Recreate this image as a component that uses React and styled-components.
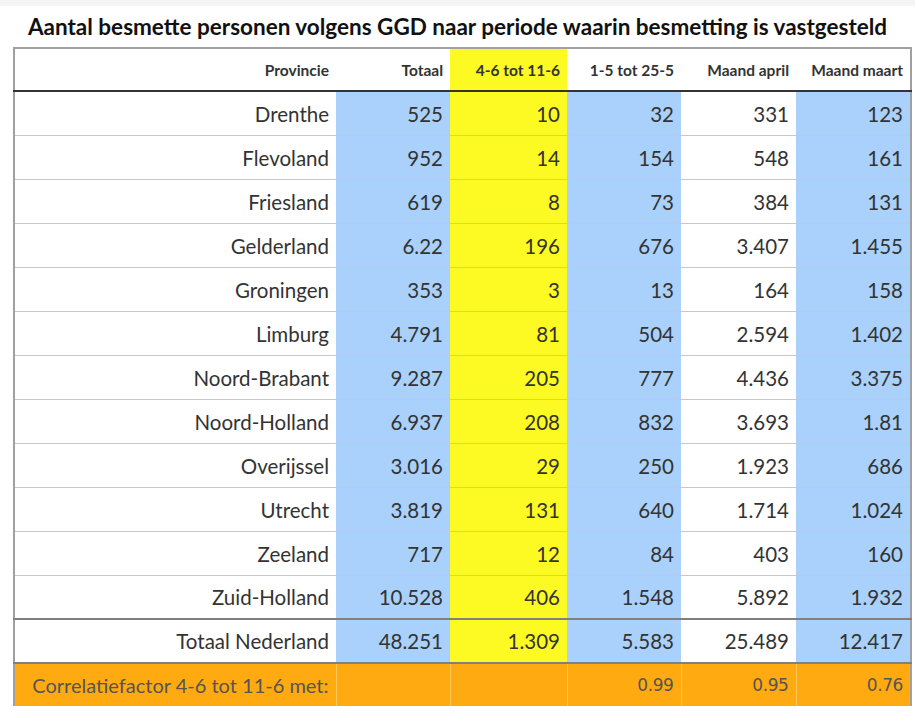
import React from "react";
import styled, { createGlobalStyle } from "styled-components";

const GlobalStyle = createGlobalStyle`
	body {
		margin: 0;
		background: #fff;
		font-family: Lato, "Liberation Sans", sans-serif;
	}
`;

const Page = styled.div`
	width: 915px;
	height: 713px;
	border-top: 6px solid #f4f4f4;
	box-sizing: border-box;
	display: flex;
	flex-direction: column;
	align-items: flex-start;
`;

const Title = styled.h1`
	margin: 0;
	width: 915px;
	height: 41px;
	display: flex;
	align-items: center;
	justify-content: center;
	font-family: Lato, "Liberation Sans", sans-serif;
	font-weight: 700;
	font-size: 22.5px;
	color: #111;
`;

const Table = styled.table`
	margin-left: 13px;
	width: 899px;
	border-collapse: collapse;
	table-layout: fixed;
	border: 2px solid #a0a0a0;
	border-bottom: none;
`;

const bg = {
	white: "#fff",
	blue: "#a9d1fb",
	yellow: "#fdf922",
};

const HeadCell = styled.th`
	height: 41px;
	padding: 0 7px;
	text-align: right;
	font-size: 15.5px;
	font-weight: 700;
	color: #333;
	background: ${(p) => (p.$tone === "yellow" ? bg.yellow : "#fff")};
	border-bottom: 2px solid #333;
`;

const Cell = styled.td`
	height: ${(p) => (p.$strong ? "42px" : "43px")};
	padding: 0 7px;
	text-align: right;
	font-size: 20.5px;
	color: #333;
	background: ${(p) => bg[p.$tone || "white"]};
	border-bottom: ${(p) => (p.$strong ? "2px solid #808080" : "1px solid #c8c8c8")};
`;

const NameCell = styled(Cell)`
	color: #333;
`;

const FooterCell = styled.td`
	height: 42px;
	padding: 0 7px;
	text-align: right;
	background: #ffaa10;
	font-family: "DejaVu Sans", Verdana, sans-serif;
	font-size: 17px;
	letter-spacing: -0.4px;
	color: #555;
	border-left: 1px solid #ffc95a;
`;

const FooterLabel = styled(FooterCell)`
	font-family: Lato, "Liberation Sans", sans-serif;
	font-size: 20px;
	letter-spacing: 0;
	color: #555;
	border-left: none;
`;

const columns = [
	{ label: "Provincie", tone: "white" },
	{ label: "Totaal", tone: "blue" },
	{ label: "4-6 tot 11-6", tone: "yellow" },
	{ label: "1-5 tot 25-5", tone: "blue" },
	{ label: "Maand april", tone: "white" },
	{ label: "Maand maart", tone: "blue" },
];

const widths = [322, 114, 117, 114, 115, 115];

const rows = [
	["Drenthe", "525", "10", "32", "331", "123"],
	["Flevoland", "952", "14", "154", "548", "161"],
	["Friesland", "619", "8", "73", "384", "131"],
	["Gelderland", "6.22", "196", "676", "3.407", "1.455"],
	["Groningen", "353", "3", "13", "164", "158"],
	["Limburg", "4.791", "81", "504", "2.594", "1.402"],
	["Noord-Brabant", "9.287", "205", "777", "4.436", "3.375"],
	["Noord-Holland", "6.937", "208", "832", "3.693", "1.81"],
	["Overijssel", "3.016", "29", "250", "1.923", "686"],
	["Utrecht", "3.819", "131", "640", "1.714", "1.024"],
	["Zeeland", "717", "12", "84", "403", "160"],
	["Zuid-Holland", "10.528", "406", "1.548", "5.892", "1.932"],
];

const total = ["Totaal Nederland", "48.251", "1.309", "5.583", "25.489", "12.417"];

const DataRow = ({ data, strong }) => (
	<tr>
		{data.map((value, i) =>
			i === 0 ? (
				<NameCell key={i} $strong={strong}>{value}</NameCell>
			) : (
				<Cell key={i} $tone={columns[i].tone} $strong={strong}>
					{value}
				</Cell>
			)
		)}
	</tr>
);

export default function App() {
	return (
		<>
			<GlobalStyle />
			<Page>
				<Title>Aantal besmette personen volgens GGD naar periode waarin besmetting is vastgesteld</Title>
				<Table>
					<colgroup>
						{widths.map((w, i) => (
							<col key={i} style={{ width: w }} />
						))}
					</colgroup>
					<thead>
						<tr>
							{columns.map((c) => (
								<HeadCell key={c.label} $tone={c.tone}>
									{c.label}
								</HeadCell>
							))}
						</tr>
					</thead>
					<tbody>
						{rows.map((r, i) => (
							<DataRow key={r[0]} data={r} strong={i === rows.length - 1} />
						))}
						<DataRow data={total} strong />
						<tr>
							<FooterLabel>Correlatiefactor 4-6 tot 11-6 met:</FooterLabel>
							<FooterCell />
							<FooterCell />
							<FooterCell>0.99</FooterCell>
							<FooterCell>0.95</FooterCell>
							<FooterCell>0.76</FooterCell>
						</tr>
					</tbody>
				</Table>
			</Page>
		</>
	);
}
